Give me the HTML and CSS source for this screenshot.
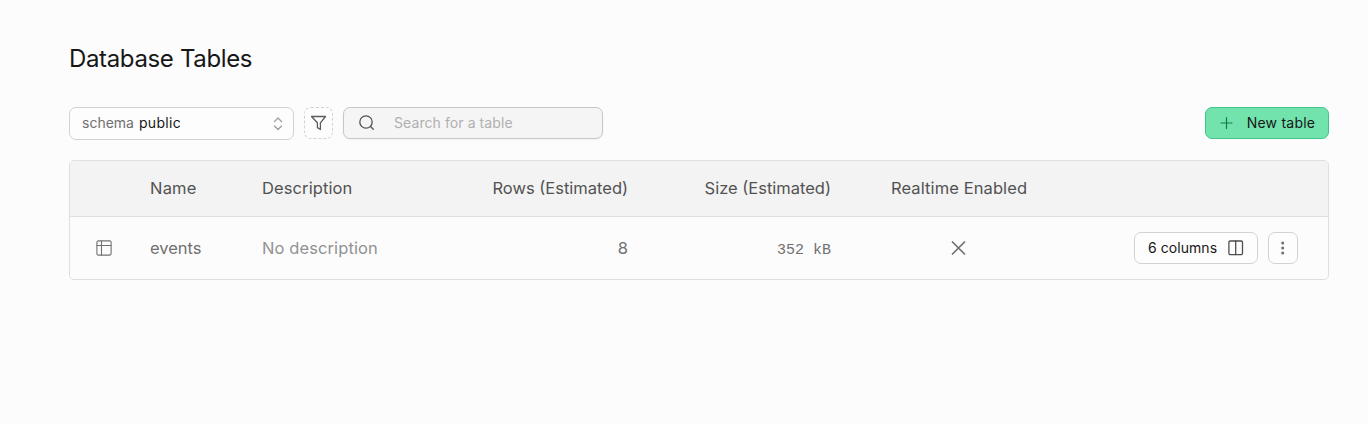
FILE: index.html
```html
<!DOCTYPE html>
<html lang="en">
<head>
<meta charset="utf-8">
<title>Database Tables</title>
<link rel="stylesheet" href="styles.css">
</head>
<body>
<main class="page">
  <h1 class="title">Database Tables</h1>
  <div class="toolbar">
    <button class="schema"><span class="schema-label">schema</span><span class="schema-value">public</span>
      <svg class="chevrons" width="16" height="16" viewBox="0 0 16 16"><path d="M4.5 5.5L8 2l3.5 3.5M4.5 10L8 13.5l3.5-3.5"/></svg>
    </button>
    <button class="filter" aria-label="Filter"><svg width="17" height="18" viewBox="0 0 17 18"><path d="M1.5 2.5h14l-5.1 6.3v6.7l-3-1.9V8.8z"/></svg></button>
    <label class="search">
      <svg width="18" height="18" viewBox="0 0 18 18"><circle cx="8" cy="8" r="6.2"/><path d="M12.5 12.5l2.8 2.8"/></svg>
      <span class="placeholder">Search for a table</span>
    </label>
    <button class="new"><svg width="14" height="14" viewBox="0 0 14 14"><path d="M6.5 1.5v11M1 7h11"/></svg><span class="new-text">New table</span></button>
  </div>
  <table class="tables">
    <colgroup><col class="c-icon"><col class="c-name"><col class="c-desc"><col class="c-rows"><col class="c-size"><col class="c-real"><col></colgroup>
    <thead><tr>
      <th></th><th><span class="h-name">Name</span></th><th><span class="h-desc">Description</span></th><th class="right">Rows (Estimated)</th><th class="right">Size (Estimated)</th><th class="center"><span class="h-real">Realtime Enabled</span></th><th></th>
    </tr></thead>
    <tbody><tr>
      <td class="icon-cell"><svg width="16" height="16" viewBox="0 0 16 16"><rect x=".9" y=".9" width="14.2" height="14.2" rx="1.5"/><path d="M5.5 1v14M1 5.5h14"/></svg></td>
      <td>events</td>
      <td class="muted"><span class="desc">No description</span></td>
      <td class="right count">8</td>
      <td class="right"><span class="mono">352 kB</span></td>
      <td class="center"><svg class="cross" width="16" height="16" viewBox="0 0 16 16"><path d="M1.5 2l12 12M13.5 2l-12 12"/></svg></td>
      <td><div class="actions">
        <button class="columns"><span class="columns-text">6 columns</span><svg width="16" height="16" viewBox="0 0 16 16"><rect x=".9" y="1" width="13.6" height="13.6" rx="1.3"/><path d="M7.7 1v13.6"/></svg></button>
        <button class="more" aria-label="More"><svg width="16" height="16" viewBox="0 0 16 16"><circle cx="7.7" cy="3" r="1.5"/><circle cx="7.7" cy="8" r="1.5"/><circle cx="7.7" cy="13" r="1.5"/></svg></button>
      </div></td>
    </tr></tbody>
  </table>
</main>
</body>
</html>
```
FILE: styles.css
```css
* { box-sizing: border-box; }
body { margin: 0; background: #fcfcfc; color: #171717; font-family: Inter, "Liberation Sans", sans-serif; }
button { margin: 0; padding: 0; font: inherit; color: inherit; background: #fdfdfd; border: 1px solid #d2d2d2; border-radius: 7px; display: flex; align-items: center; }
svg { display: block; flex: none; fill: none; stroke: #707070; stroke-width: 1.3; stroke-linecap: round; stroke-linejoin: round; }
.page { padding: 42px 39px 0 69px; }
.title { margin: 0; height: 34px; line-height: 34px; font-size: 24px; font-weight: 400; letter-spacing: -.35px; }
.toolbar { display: flex; align-items: flex-start; margin-top: 31px; height: 53px; font-size: 14px; }
.schema { width: 225px; height: 33px; padding: 0 7px 0 12px; gap: 5px; }
.schema-label { color: #707070; position: relative; top: -1px; }
.schema-value { letter-spacing: .3px; position: relative; top: -1px; }
.chevrons { margin-left: auto; stroke: #a0a0a0; stroke-width: 1.4; }
.filter { width: 29px; height: 32px; margin-left: 10px; justify-content: center; border-style: dashed; }
.filter svg { stroke: #5c5c5c; }
.search { width: 260px; height: 32px; margin-left: 10px; padding: 0 14px; display: flex; align-items: center; gap: 18px; background: #f5f5f5; border: 1px solid #c7c7c7; border-radius: 7px; box-shadow: 0 1px 2px rgba(0,0,0,.05); }
.search svg { stroke: #525252; }
.placeholder { color: #b0b0b0; letter-spacing: .08px; position: relative; top: -1px; }
.new { width: 124px; height: 32px; margin-left: auto; padding: 0 13px 0 14px; justify-content: space-between; background: #72e3ad; border-color: #3fc589; }
.new svg { stroke: #16794c; stroke-width: 1.2; }
.new-text { letter-spacing: .23px; margin-right: -.23px; }
.new-text, .columns-text { position: relative; top: -1px; }
.columns-text { letter-spacing: .06px; }
.tables { width: 1260px; height: 120px; table-layout: fixed; border-collapse: separate; border-spacing: 0; border: 1px solid #dfdfdf; border-radius: 5px; overflow: hidden; font-size: 16.5px; }
.c-icon { width: 50px; } .c-name { width: 112px; } .c-desc { width: 230px; } .c-rows { width: 196px; } .c-size { width: 203px; } .c-real { width: 196px; }
th, td { padding: 0 30px; text-align: left; font-weight: 400; white-space: nowrap; color: #707070; }
th { height: 56px; padding-bottom: 2px; background: #f3f3f3; border-bottom: 1px solid #dfdfdf; color: #525252; }
td { height: 62px; }
.h-name { letter-spacing: .2px; }
.h-desc, .h-real, .desc { letter-spacing: .1px; }
th.right { text-align: right; }
.right { text-align: right; }
.center { text-align: center; }
.icon-cell { padding: 0 0 0 26px; }
.icon-cell svg { stroke-width: 1.1; }
.muted { color: #929292; }
.mono { font-family: "Liberation Mono", monospace; font-size: 15px; }
.cross { margin: 0 auto; stroke-width: 1.7; }
.actions { display: flex; justify-content: flex-end; gap: 10px; font-size: 14px; color: #171717; }
.columns { width: 124px; height: 32px; padding: 0 13px; justify-content: space-between; }
.columns svg { stroke: #4e4e4e; }
.more { width: 30px; height: 32px; justify-content: center; }
.more svg { fill: #707070; stroke: none; }
```
